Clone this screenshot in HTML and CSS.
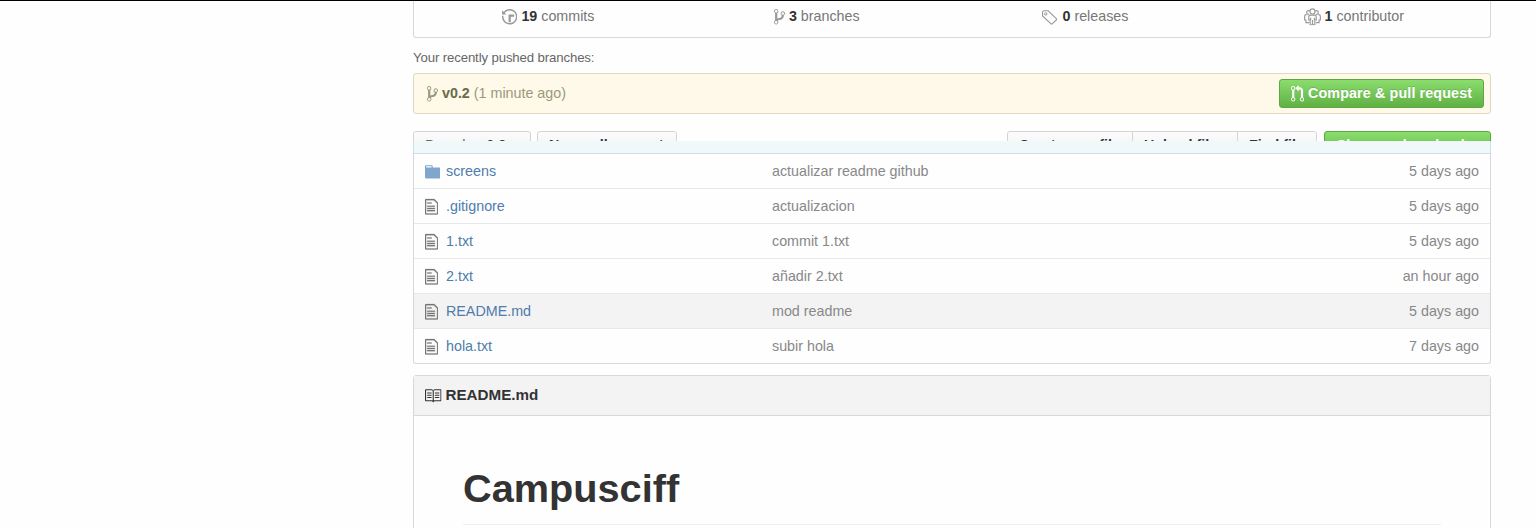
FILE: index.html
```html
<!DOCTYPE html>
<html lang="en">
<head>
<meta charset="utf-8">
<title>Campusciff</title>
<link rel="stylesheet" href="styles.css">
</head>
<body>
<svg width="0" height="0" class="defs">
  <symbol id="history" viewBox="0 0 14 16"><path d="M8 13H6V6h5v2H8v5zM7 1C4.81 1 2.87 2.02 1.59 3.59L0 2v4h4L2.5 4.5C3.55 3.17 5.17 2.3 7 2.3c3.14 0 5.7 2.56 5.7 5.7s-2.56 5.7-5.7 5.7A5.71 5.71 0 0 1 1.3 8c0-.34.03-.67.09-1H.08C.03 7.33 0 7.66 0 8c0 3.86 3.14 7 7 7s7-3.14 7-7-3.14-7-7-7z"/></symbol>
  <symbol id="branch" viewBox="0 0 10 16"><path d="M10 5c0-1.11-.89-2-2-2a1.993 1.993 0 0 0-1 3.72v.3c-.02.52-.23.98-.63 1.38-.4.4-.86.61-1.38.63-.83.02-1.48.16-2 .45V4.72a1.993 1.993 0 0 0-1-3.72C.88 1 0 1.89 0 3a2 2 0 0 0 1 1.72v6.56c-.59.35-1 .99-1 1.72 0 1.11.89 2 2 2 1.11 0 2-.89 2-2 0-.53-.2-1-.53-1.36.09-.06.48-.41.59-.47.25-.11.56-.17.94-.17 1.05-.05 1.95-.45 2.75-1.25S8.95 7.77 9 6.73h-.02C9.59 6.37 10 5.73 10 5zM2 1.8c.66 0 1.2.55 1.2 1.2 0 .65-.55 1.2-1.2 1.2C1.35 4.2.8 3.65.8 3c0-.65.55-1.2 1.2-1.2zm0 12.41c-.66 0-1.2-.55-1.2-1.2 0-.65.55-1.2 1.2-1.2.65 0 1.2.55 1.2 1.2 0 .65-.55 1.2-1.2 1.2zm6-8c-.66 0-1.2-.55-1.2-1.2 0-.65.55-1.2 1.2-1.2.65 0 1.2.55 1.2 1.2 0 .65-.55 1.2-1.2 1.2z"/></symbol>
  <symbol id="tag" viewBox="0 0 14 16"><path d="M.5 3.8Q.5 2.5 1.8 2.5H5.6L13 9.6Q13.6 10.3 13 10.9L9.2 14.4Q8.6 14.9 8 14.3L.5 7.2Z" fill="none" stroke="currentColor" stroke-width="1"/><circle cx="3.4" cy="5.4" r="1.1" fill="none" stroke="currentColor" stroke-width=".9"/></symbol>
  <symbol id="people" viewBox="0 0 16 16"><g fill="none" stroke="currentColor" stroke-width="1.1"><circle cx="8" cy="3" r="2.4"/><path d="M5.4 2.8A1.7 1.7 0 1 0 4.7 5.600M10.600 2.800A1.700 1.700 0 1 1 11.300 5.600M5.800 6.500H10.200Q11.500 6.500 11.500 7.800V11H10.200V15.500H5.800V11H4.500V7.800Q4.500 6.500 5.800 6.500ZM8 11V15M2.500 6H1.800Q.600 6.300.600 7.800V11H1.800V13.500H4.800M13.500 6H14.200Q15.400 6.300 15.400 7.800V11H14.200V13.500H11.200M6.200 9V11M9.800 9V11"/></g></symbol>
  <symbol id="pull" viewBox="0 0 12 16"><path d="M11 11.28V5c-.03-.78-.34-1.47-.94-2.06C9.46 2.35 8.78 2.03 8 2H7V0L4 3l3 3V4h1c.27.02.48.11.69.31.21.2.3.42.31.69v6.28A1.993 1.993 0 0 0 10 15a1.993 1.993 0 0 0 1-3.72zm-1 2.92c-.66 0-1.2-.55-1.2-1.2 0-.65.55-1.2 1.2-1.2.65 0 1.2.55 1.2 1.2 0 .65-.55 1.2-1.2 1.2zM4 3c0-1.110-.890-2-2-2a1.993 1.993 0 0 0-1 3.720v6.560A1.993 1.993 0 0 0 2 15a1.993 1.993 0 0 0 1-3.720V4.720c.590-.340 1-.980 1-1.720zm-.800 10c0 .660-.550 1.200-1.200 1.200-.650 0-1.200-.550-1.200-1.200 0-.650.550-1.200 1.200-1.200.650 0 1.200.550 1.200 1.200zM2 4.200C1.340 4.200.800 3.650.800 3c0-.650.550-1.200 1.200-1.200.650 0 1.200.550 1.200 1.200 0 .650-.550 1.200-1.200 1.200z"/></symbol>
  <symbol id="file" viewBox="0 0 12 16"><path d="M6 5H2V4h4v1zM2 8h7V7H2v1zm0 2h7V9H2v1zm0 2h7v-1H2v1zm10-7.5V14c0 .55-.45 1-1 1H1c-.55 0-1-.45-1-1V2c0-.55.45-1 1-1h7.500L12 4.500zM11 5L8 2H1v12h10V5z"/></symbol>
  <symbol id="folder" viewBox="0 0 14 16"><path d="M13 4H7V3c0-.66-.31-1-1-1H1c-.55 0-1 .45-1 1v10c0 .55.45 1 1 1h12c.55 0 1-.45 1-1V5c0-.55-.45-1-1-1zM6 4H1V3h5v1z"/></symbol>
  <symbol id="book" viewBox="1 0 15 16"><path d="M3 5h4v1H3V5zm0 3h4V7H3v1zm0 2h4V9H3v1zm11-5h-4v1h4V5zm0 2h-4v1h4V7zm0 2h-4v1h4V9zm2-6v9c0 .55-.45 1-1 1H9.500l-1 1-1-1H2c-.55 0-1-.45-1-1V3c0-.55.45-1 1-1h5.500l1 1 1-1H15c.55 0 1 .45 1 1zm-8 .5L7.500 3H2v9h6V3.500zm7-.5H9.500l-.5.500V12h6V3z"/></symbol>
</svg>
<main class="page">
  <ul class="stats">
    <li><svg class="icon history"><use href="#history"/></svg><span><b>19</b> commits</span></li>
    <li><svg class="icon branch"><use href="#branch"/></svg><span><b>3</b> branches</span></li>
    <li><svg class="icon tag"><use href="#tag"/></svg><span><b>0</b> releases</span></li>
    <li><svg class="icon people"><use href="#people"/></svg><span><b>1</b> contributor</span></li>
  </ul>
  <p class="recent-title">Your recently pushed branches:</p>
  <div class="recent">
    <svg class="icon branch"><use href="#branch"/></svg><span class="label"><b>v0.2</b> (1 minute ago)</span>
    <button class="compare"><svg class="icon pull"><use href="#pull"/></svg><span class="label">Compare &amp; pull request</span></button>
  </div>
  <div class="toolbar">
    <button class="btn select"><span class="muted">Branch:</span> v0.2</button>
    <button class="btn pr">New pull request</button>
    <div class="group"><button class="btn create">Create new file</button><button class="btn upload">Upload files</button><button class="btn find">Find file</button></div>
    <button class="btn clone">Clone or download</button>
  </div>
  <section class="files">
    <div class="commit"></div>
    <div class="row"><svg class="icon folder"><use href="#folder"/></svg><a>screens</a><span>actualizar readme github</span><time>5 days ago</time></div>
    <div class="row"><svg class="icon file"><use href="#file"/></svg><a>.gitignore</a><span>actualizacion</span><time>5 days ago</time></div>
    <div class="row"><svg class="icon file"><use href="#file"/></svg><a>1.txt</a><span>commit 1.txt</span><time>5 days ago</time></div>
    <div class="row"><svg class="icon file"><use href="#file"/></svg><a>2.txt</a><span>añadir 2.txt</span><time>an hour ago</time></div>
    <div class="row active"><svg class="icon file"><use href="#file"/></svg><a>README.md</a><span>mod readme</span><time>5 days ago</time></div>
    <div class="row"><svg class="icon file"><use href="#file"/></svg><a>hola.txt</a><span>subir hola</span><time>7 days ago</time></div>
  </section>
  <article class="readme">
    <h3><svg class="icon book"><use href="#book"/></svg><span>README.md</span></h3>
    <div class="body"><h1>Campusciff</h1></div>
  </article>
</main>
</body>
</html>
```
FILE: styles.css
```css
* { box-sizing: border-box; }
body {
  margin: 0;
  height: 528px;
  overflow: hidden;
  border-top: 1px solid #000;
  background: #fefefe;
  color: #333;
  font: 14.3px/20px "Liberation Sans", Arial, sans-serif;
}
.defs { display: block; height: 0; }
.page { width: 1078px; margin-left: 413px; }
.icon { fill: currentColor; flex: none; height: 17.6px; }
.history { width: 15.4px; }
.branch { width: 11px; }
.tag { width: 15.4px; }
.people { width: 17px; }
.pull { width: 13.2px; }
.file { width: 13.2px; stroke: currentColor; stroke-width: .25px; }
.folder { width: 15.4px; }
.book { width: 16.5px; }

.stats {
  display: grid;
  grid-template-columns: repeat(4, 1fr);
  height: 37px;
  margin: 0;
  padding: 5px 2px 0 0;
  list-style: none;
  border: 1px solid #d8d8d8;
  border-top: 0;
  border-radius: 0 0 3px 3px;
  color: #777;
}
.stats li { display: flex; justify-content: center; height: 20px; }
.stats b { color: #333; }
.stats .icon { color: #999; margin: 2px 4px 0 0; }
.stats .tag { margin-right: 5px; }

.recent-title { margin: 10px 0 5px; font-size: 13.2px; letter-spacing: -.12px; color: #666; }
.recent {
  display: flex;
  align-items: center;
  height: 41px;
  padding: 0 6px 0 13px;
  border: 1px solid #dfd8c2;
  border-radius: 3px;
  background: #fff9ea;
  color: #99997a;
}
.recent b { color: #6b6b4c; }
.recent .branch { margin-right: 4px; }
.label { padding-bottom: 2px; }
.compare {
  display: flex;
  align-items: center;
  justify-content: center;
  width: 205px;
  height: 29px;
  margin-left: auto;
  padding: 0;
  border: 1px solid #5ca941;
  border-radius: 3px;
  background: linear-gradient(#8add6d, #60b044);
  color: #fff;
  font: bold 14.3px/20px "Liberation Sans", Arial, sans-serif;
  letter-spacing: .13px;
  text-shadow: 0 -1px 0 rgba(0, 0, 0, .15);
}
.recent .pull { margin-right: 4px; }

/* Only the top edge of the toolbar shows above the file list */
.toolbar { display: flex; height: 10px; margin-top: 17px; overflow: hidden; }
.btn {
  height: 29px;
  padding: 0 0 0 11px;
  border: 1px solid #d5d5d5;
  border-radius: 3px;
  background: linear-gradient(#fcfcfc, #eee);
  color: #333;
  font: bold 14.3px/25px "Liberation Sans", Arial, sans-serif;
  text-align: left;
  white-space: nowrap;
}
.muted { font-weight: normal; color: #666; }
.select { width: 118px; margin-right: 6px; }
.pr { width: 140px; }
.group { display: flex; margin-left: auto; }
.create { width: 126px; border-radius: 3px 0 0 3px; }
.upload { width: 106px; margin-left: -1px; border-radius: 0; }
.find { width: 80px; margin-left: -1px; border-radius: 0 3px 3px 0; }
.clone {
  width: 167px;
  margin-left: 7px;
  border-color: #5ca941;
  background: linear-gradient(#8add6d, #60b044);
  color: #fff;
}

.files {
  border: 1px solid #d8d8d8;
  border-top: 0;
  border-radius: 0 0 3px 3px;
}
.commit {
  height: 13px;
  margin: 0 -1px;
  border: 1px solid #c9dfe9;
  border-top: 0;
  background: #f1f8fa;
}
.row {
  display: grid;
  grid-template-columns: 21px 326px 1fr auto;
  align-items: center;
  height: 35px;
  padding: 0 11px;
  border-bottom: 1px solid #e8e8e8;
  color: #888;
}
.row:last-child { height: 34px; border-bottom: 0; }
.row.active { background: #f3f3f3; }
.row a { color: #4f7cac; }
.row .icon { margin-top: 2px; color: #777; }
.row .folder { color: #80a6cd; }

.readme {
  height: 170px;
  margin-top: 11px;
  border: 1px solid #d8d8d8;
  border-radius: 3px 3px 0 0;
}
.readme h3 {
  display: flex;
  align-items: center;
  height: 40px;
  margin: 0;
  padding: 0 11px 2px;
  border-bottom: 1px solid #d8d8d8;
  background: #f3f3f3;
  font-size: 15.2px;
}
.book { margin: 2px 4px 0 0; }
.body { padding: 48px 49px 0; }
.body h1 {
  height: 61px;
  margin: 0;
  border-bottom: 1px solid #eee;
  font-size: 39.7px;
  line-height: 48px;
}
```
